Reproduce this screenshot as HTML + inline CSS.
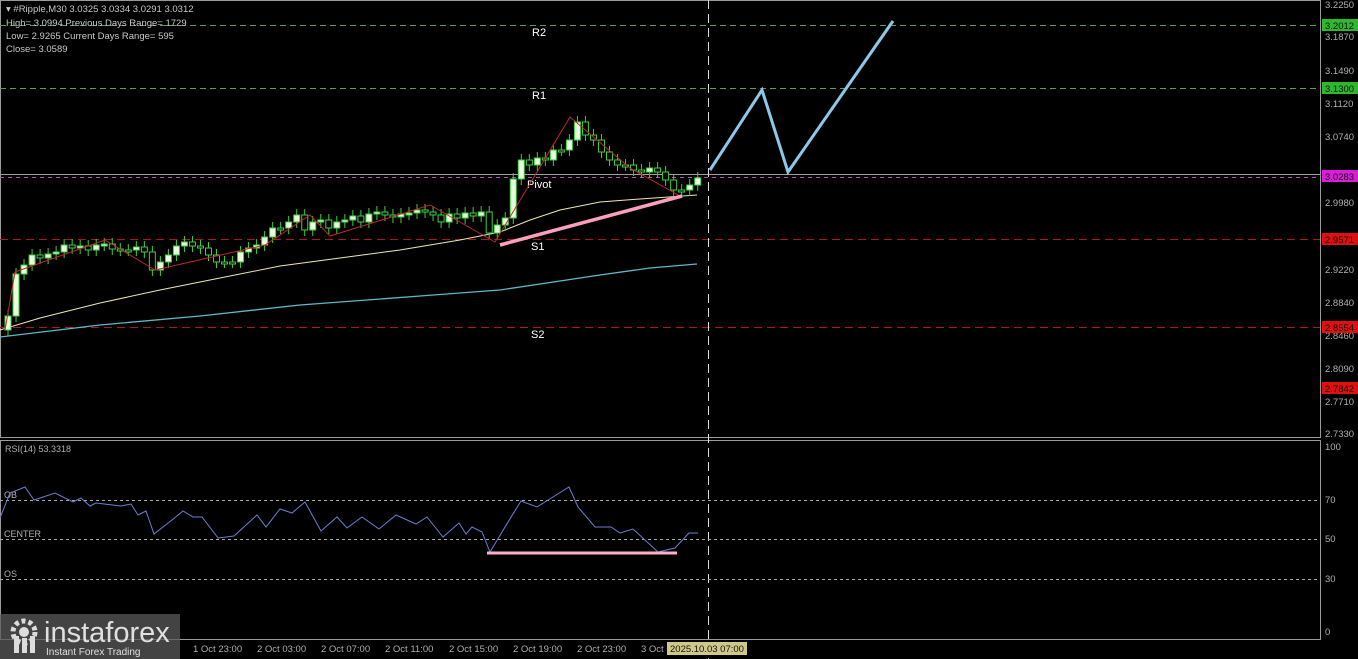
<!DOCTYPE html>
<html><head><meta charset="utf-8"><style>
html,body{margin:0;padding:0;background:#000;width:1358px;height:659px;overflow:hidden}
svg{display:block}
text{font-family:"Liberation Sans",sans-serif}
</style></head><body>
<svg id="s" width="1358" height="659" xmlns="http://www.w3.org/2000/svg">
<rect width="1358" height="659" fill="#000"/>
<rect x="0.5" y="0.5" width="1320" height="437" fill="none" stroke="#9a9a9a"/>
<rect x="0.5" y="440.5" width="1320" height="199" fill="none" stroke="#9a9a9a"/>
<g stroke-width="1" fill="none">
<line x1="0" y1="25.5" x2="1320" y2="25.5" stroke="#5a9a5a" stroke-dasharray="6,4"/>
<line x1="0" y1="88.5" x2="1320" y2="88.5" stroke="#5a9a5a" stroke-dasharray="6,4"/>
<line x1="0" y1="174.5" x2="1320" y2="174.5" stroke="#a0a0a0"/>
<line x1="0" y1="177.5" x2="1320" y2="177.5" stroke="#b050b0" stroke-dasharray="4,4"/>
<line x1="0" y1="239.5" x2="1320" y2="239.5" stroke="#b01818" stroke-dasharray="8,5"/>
<line x1="0" y1="327.5" x2="1320" y2="327.5" stroke="#b01818" stroke-dasharray="8,5"/>
<line x1="708.5" y1="0" x2="708.5" y2="659" stroke="#ddd" stroke-dasharray="9,5"/>
</g>
<g fill="#fff" font-size="11">
<text x="532" y="36">R2</text><text x="532" y="99">R1</text>
<text x="527" y="188">Pivot</text><text x="531" y="250">S1</text><text x="531" y="338">S2</text>
</g>
<polyline fill="none" stroke="#5fb8c8" stroke-width="1.3" points="0,337 100,325 200,316 300,305 420,296 500,290 560,281 600,275 650,268 697,264"/>
<polyline fill="none" stroke="#f0e6b0" stroke-width="1" points="0,330 40,318 100,303 160,290 220,278 280,266 340,258 400,250 460,240 500,232 530,220 560,210 600,202 640,199 697,195"/>
<g id="candles"></g>
<polyline fill="none" stroke="#c02828" stroke-width="1" points="5,330 15,272 105,240 155,270 265,245 310,215 330,236 430,205 495,242 570,117 630,168 680,196"/>
<line x1="500" y1="245" x2="682" y2="196" stroke="#ff9fc0" stroke-width="3.5"/>
<polyline fill="none" stroke="#8ec8e8" stroke-width="3" points="710,170 762,90 788,172 893,21"/>
<g fill="#b0b0b0" font-size="9.5">
<text x="1325" y="8">3.2250</text><text x="1325" y="40">3.1870</text><text x="1325" y="74">3.1490</text>
<text x="1325" y="107">3.1120</text><text x="1325" y="140">3.0740</text><text x="1325" y="206">2.9980</text>
<text x="1325" y="273">2.9220</text><text x="1325" y="306">2.8840</text><text x="1325" y="339">2.8460</text>
<text x="1325" y="372">2.8090</text><text x="1325" y="405">2.7710</text><text x="1325" y="437">2.7330</text>
<text x="1325" y="450">100</text><text x="1325" y="503">70</text><text x="1325" y="542">50</text>
<text x="1325" y="582">30</text><text x="1325" y="635">0</text>
</g>
<g font-size="9.5">
<rect x="1322" y="19" width="36" height="12" fill="#2eb82e"/><text x="1325" y="29" fill="#111">3.2012</text>
<rect x="1322" y="82" width="36" height="12" fill="#2eb82e"/><text x="1325" y="92" fill="#111">3.1300</text>
<rect x="1322" y="170" width="36" height="12" fill="#d91ed9"/><text x="1325" y="180" fill="#111">3.0283</text>
<rect x="1322" y="233" width="36" height="12" fill="#e01010"/><text x="1325" y="243" fill="#111">2.9571</text>
<rect x="1322" y="321" width="36" height="12" fill="#e01010"/><text x="1325" y="331" fill="#111">2.8554</text>
<rect x="1322" y="382" width="36" height="12" fill="#e01010"/><text x="1325" y="392" fill="#111">2.7842</text>
</g>
<g fill="#c8c8c8" font-size="9.5">
<text x="6" y="12">▾ #Ripple,M30  3.0325 3.0334 3.0291 3.0312</text>
<text x="6" y="26">High= 3.0994    Previous Days Range= 1729</text>
<text x="6" y="39">Low= 2.9265     Current Days Range= 595</text>
<text x="6" y="52">Close= 3.0589</text>
</g>
<g stroke="#aaa" stroke-dasharray="3,3">
<line x1="0" y1="500.5" x2="1320" y2="500.5"/><line x1="0" y1="539.5" x2="1320" y2="539.5"/><line x1="0" y1="579.5" x2="1320" y2="579.5"/>
</g>
<g fill="#b0b0b0" font-size="9">
<text x="5" y="452">RSI(14) 53.3318</text><text x="4" y="498">OB</text><text x="4" y="537">CENTER</text><text x="4" y="577">OS</text>
</g>
<polyline fill="none" stroke="#6a7fd0" stroke-width="1" points="0,518 10,493 25,487 34,500 55,493 73,502 81,498 90,506 96,503 121,506 131,504 138,515 146,511 154,534 172,520 183,511 193,517 202,517 218,538 234,536 257,515 266,527 280,509 292,513 305,502 321,531 337,517 347,528 362,517 379,529 396,515 416,524 427,517 443,537 459,523 466,534 472,527 482,532 490,552 505,527 521,501 537,507 569,487 578,507 595,527 611,527 620,533 633,529 658,552 675,548 689,533 698,533"/>
<line x1="487" y1="553" x2="677" y2="553" stroke="#ffb0c8" stroke-width="3"/>
<g fill="#b0b0b0" font-size="9.5">
<text x="193" y="652">1 Oct 23:00</text><text x="257" y="652">2 Oct 03:00</text><text x="321" y="652">2 Oct 07:00</text>
<text x="385" y="652">2 Oct 11:00</text><text x="449" y="652">2 Oct 15:00</text><text x="513" y="652">2 Oct 19:00</text>
<text x="577" y="652">2 Oct 23:00</text><text x="641" y="652">3 Oct</text>
</g>
<rect x="667" y="642" width="80" height="13" fill="#d0c888"/>
<text x="670" y="652" fill="#111" font-size="9.5">2025.10.03 07:00</text>
<rect x="0" y="614" width="180" height="45" fill="#5a5a5a" opacity="0.75"/>
<g fill="#dcdcdc">
<circle cx="24" cy="632" r="11" fill="none" stroke="#dcdcdc" stroke-width="5" stroke-dasharray="4,3"/>
<circle cx="24" cy="632" r="5"/>
<rect x="14" y="636" width="5" height="17"/><rect x="22" y="638" width="5" height="15"/><rect x="30" y="636" width="5" height="17"/>
</g>
<text x="44" y="642" fill="#e0e0e0" font-size="29">instaforex</text>
<text x="46" y="655" fill="#e0e0e0" font-size="10">Instant Forex Trading</text>
</svg>
<script>
var c=[316,274,265,255,258,254,252,245,248,246,250,245,244,249,250,250,247,252,270,262,255,246,242,246,248,255,262,262,262,252,248,245,237,228,228,222,215,230,222,220,228,222,220,216,222,214,212,215,217,214,213,210,212,215,222,214,218,213,216,212,233,225,218,179,160,165,158,160,150,150,140,122,135,140,152,160,165,165,170,172,168,172,180,190,190,185,178];
var g=document.getElementById('candles'),h='',o=330;
for(var i=0;i<c.length;i++){var x=8+i*8.02,cl=c[i],t=Math.min(o,cl),b=Math.max(o,cl),bh=Math.max(b-t,2);
h+='<line x1="'+x+'" y1="'+(t-6)+'" x2="'+x+'" y2="'+(b+6)+'" stroke="#3fcf3f"/>';
h+='<rect x="'+(x-3)+'" y="'+t+'" width="6" height="'+bh+'" fill="'+(cl<o?'#eaffe0':'#000')+'" stroke="#3fcf3f" stroke-width="1"/>';o=cl;}
g.innerHTML=h;
</script>
</body></html>
